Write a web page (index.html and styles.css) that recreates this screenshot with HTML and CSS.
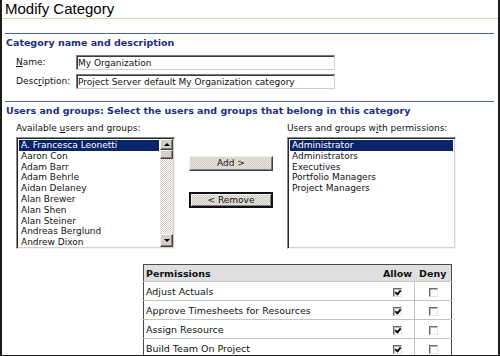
FILE: index.html
```html
<!DOCTYPE html>
<html lang="en">
<head>
    <meta charset="UTF-8">
    <meta name="viewport" content="width=device-width, initial-scale=1.0">
    <title>Modify Category</title>
    <link rel="stylesheet" href="styles.css">
</head>
<body>
    <div class="page">
        <h1 class="page-title">Modify Category</h1>

        <!-- Name and description -->
        <section class="block">
            <h2 class="block-head">Category name and description</h2>
            <div class="fields">
                <div class="field">
                    <label class="field-label" for="cat-name"><u>N</u>ame:</label>
                    <input class="field-input" id="cat-name" type="text" value="My Organization">
                </div>
                <div class="field">
                    <label class="field-label" for="cat-desc">Desc<u>r</u>iption:</label>
                    <input class="field-input" id="cat-desc" type="text" value="Project Server default My Organization category">
                </div>
            </div>
        </section>

        <!-- Users and groups -->
        <section class="block">
            <h2 class="block-head">Users and groups: Select the users and groups that belong in this category</h2>
            <div class="picker">
                <div class="picker-label">Available <u>u</u>sers and groups:</div>
                <div></div>
                <div class="picker-label">Users and groups w<u>i</u>th permissions:</div>

                <div class="listbox">
                    <ul class="list">
                        <li class="selected">A. Francesca Leonetti</li>
                        <li>Aaron Con</li>
                        <li>Adam Barr</li>
                        <li>Adam Behrle</li>
                        <li>Aidan Delaney</li>
                        <li>Alan Brewer</li>
                        <li>Alan Shen</li>
                        <li>Alan Steiner</li>
                        <li>Andreas Berglund</li>
                        <li>Andrew Dixon</li>
                    </ul>
                    <div class="scrollbar">
                        <div class="scroll-btn"><span class="arrow-up"></span></div>
                        <div class="scroll-thumb"></div>
                        <div class="scroll-track"></div>
                        <div class="scroll-btn scroll-btn-down"><span class="arrow-down"></span></div>
                    </div>
                </div>

                <div class="move-buttons">
                    <button class="move-button" type="button">Add &gt;</button>
                    <button class="move-button move-button-default" type="button">&lt; Remove</button>
                </div>

                <div class="listbox">
                    <ul class="list">
                        <li class="selected">Administrator</li>
                        <li>Administrators</li>
                        <li>Executives</li>
                        <li>Portfolio Managers</li>
                        <li>Project Managers</li>
                    </ul>
                </div>
            </div>

            <table class="perms">
                <thead>
                    <tr>
                        <th class="perm-name">Permissions</th>
                        <th class="perm-allow">Allow</th>
                        <th class="perm-deny">Deny</th>
                    </tr>
                </thead>
                <tbody>
                    <tr>
                        <td class="perm-name">Adjust Actuals</td>
                        <td class="perm-allow"><span class="check checked"></span></td>
                        <td class="perm-deny"><span class="check"></span></td>
                    </tr>
                    <tr>
                        <td class="perm-name">Approve Timesheets for Resources</td>
                        <td class="perm-allow"><span class="check checked"></span></td>
                        <td class="perm-deny"><span class="check"></span></td>
                    </tr>
                    <tr>
                        <td class="perm-name">Assign Resource</td>
                        <td class="perm-allow"><span class="check checked"></span></td>
                        <td class="perm-deny"><span class="check"></span></td>
                    </tr>
                    <tr>
                        <td class="perm-name">Build Team On Project</td>
                        <td class="perm-allow"><span class="check checked"></span></td>
                        <td class="perm-deny"><span class="check"></span></td>
                    </tr>
                </tbody>
            </table>
        </section>
    </div>
</body>
</html>
```

FILE: styles.css
```css
/* Basic reset */
* {
    margin: 0;
    padding: 0;
    box-sizing: border-box;
}

body {
    font-family: "DejaVu Sans", Verdana, sans-serif;
    font-size: 9px;
    color: #111;
    background-color: #fff;
}

/* Window frame */
.page {
    width: 500px;
    height: 356px;
    border-left: 2px solid #1c1c1c;
    border-right: 2px solid #1c1c1c;
    border-bottom: 1px solid #1c1c1c;
    overflow: hidden;
}

.page-title {
    font: normal 15px/18px "Liberation Sans", Arial, sans-serif;
    color: #000;
    height: 19px;
    padding-left: 3px;
    border-bottom: 1px solid #f2cf92;
}

/* Sections */
.block {
    margin: 14px 4px 0 3px;
    border-top: 1px solid #4d63a6;
}

.block + .block {
    margin-top: 12px;
}

.block-head {
    font-size: 9.5px;
    font-weight: bold;
    line-height: 11px;
    color: #1e2d7d;
    padding: 3px 0 0 1px;
}

/* Name / description fields */
.fields {
    display: flex;
    flex-direction: column;
    gap: 4px;
    padding: 7px 0 0 11px;
}

.field {
    display: flex;
    align-items: center;
}

.field-label {
    width: 60px;
    line-height: 11px;
}

.field-input {
    width: 259px;
    height: 15px;
    padding: 0 1px;
    font: 9px "DejaVu Sans", Verdana, sans-serif;
    color: #111;
    border: 1px solid;
    border-color: #7a7a7a #cfcfcf #cfcfcf #7a7a7a;
    box-shadow: inset 1px 1px 0 #3c3c3c;
    outline: none;
}

/* Users picker */
.picker {
    display: grid;
    grid-template-columns: 159px 84px 169px;
    column-gap: 14px;
    row-gap: 3px;
    padding: 7px 0 0 11px;
}

.picker-label {
    line-height: 11px;
}

.listbox {
    display: flex;
    height: 112px;
    border: 1px solid;
    border-color: #8a8a8a #f4f4f4 #f4f4f4 #8a8a8a;
    box-shadow: inset 1px 1px 0 #262626, inset -1px -1px 0 #d4d0c8;
    padding: 1px;
    background-color: #fff;
}

.list {
    list-style: none;
    flex: 1;
    padding: 1px 1px 0 1px;
    overflow: hidden;
}

.list li {
    line-height: 10.8px;
    padding-left: 2px;
    white-space: nowrap;
}

.list li.selected {
    background-color: #0a246a;
    color: #fff;
}

/* Classic scrollbar */
.scrollbar {
    width: 13px;
    display: flex;
    flex-direction: column;
}

.scroll-btn,
.scroll-thumb {
    background-color: #d4d0c8;
    border: 1px solid;
    border-color: #f4f4f4 #404040 #404040 #f4f4f4;
    box-shadow: inset -1px -1px 0 #808080;
}

.scroll-btn {
    height: 11px;
    display: flex;
    align-items: center;
    justify-content: center;
}

.scroll-btn-down {
    height: 13px;
}

.scroll-thumb {
    height: 9px;
}

.scroll-track {
    flex: 1;
    background: repeating-conic-gradient(#d4d0c8 0 25%, #fff 0 50%) 0 0 / 2px 2px;
}

.arrow-up,
.arrow-down {
    width: 0;
    height: 0;
    border-left: 3px solid transparent;
    border-right: 3px solid transparent;
}

.arrow-up {
    border-bottom: 3px solid #000;
}

.arrow-down {
    border-top: 3px solid #000;
}

/* Add / Remove buttons */
.move-buttons {
    display: flex;
    flex-direction: column;
    align-items: flex-start;
    gap: 21px;
    padding-top: 19px;
}

.move-button {
    width: 84px;
    height: 15px;
    font: 9px/11px "DejaVu Sans", Verdana, sans-serif;
    color: #111;
    background: repeating-conic-gradient(#cfcbc3 0 25%, #e9e7e2 0 50%) 0 0 / 2px 2px;
    border: 1px solid;
    border-color: #f4f4f4 #404040 #404040 #f4f4f4;
    box-shadow: inset -1px -1px 0 #808080;
}

.move-button-default {
    height: 16px;
    border: 2px solid #111;
    box-shadow: inset 1px 1px 0 #f4f4f4, inset -1px -1px 0 #808080;
}

/* Permissions table */
.perms {
    margin: 15px 0 0 138px;
    width: 309px;
    border-collapse: collapse;
    border: 1px solid #4a4a4a;
    font-size: 9.5px;
}

.perms th {
    height: 17px;
    font-weight: bold;
    background: repeating-conic-gradient(#d2d2d2 0 25%, #ececec 0 50%) 0 0 / 2px 2px;
    border-bottom: 1px solid #c4c4c4;
}

.perms td {
    height: 19px;
    border-bottom: 1px solid #c4c4c4;
}

.perms .perm-name {
    text-align: left;
    padding-left: 2px;
}

.perms .perm-allow {
    width: 34px;
    text-align: center;
}

.perms .perm-deny {
    width: 37px;
    text-align: center;
}

.perms td.perm-allow {
    border-right: 1px solid #c4c4c4;
}

.check {
    display: inline-block;
    width: 9px;
    height: 9px;
    vertical-align: middle;
    background-color: #fff;
    border: 1px solid;
    border-color: #6a6a6a #e4e4e4 #e4e4e4 #6a6a6a;
    box-shadow: inset 1px 1px 0 #b8b8b8;
    position: relative;
}

.check.checked::after {
    content: "";
    position: absolute;
    left: 2px;
    top: 0px;
    width: 2px;
    height: 4px;
    border-right: 2px solid #111;
    border-bottom: 2px solid #111;
    transform: rotate(40deg);
}
```
